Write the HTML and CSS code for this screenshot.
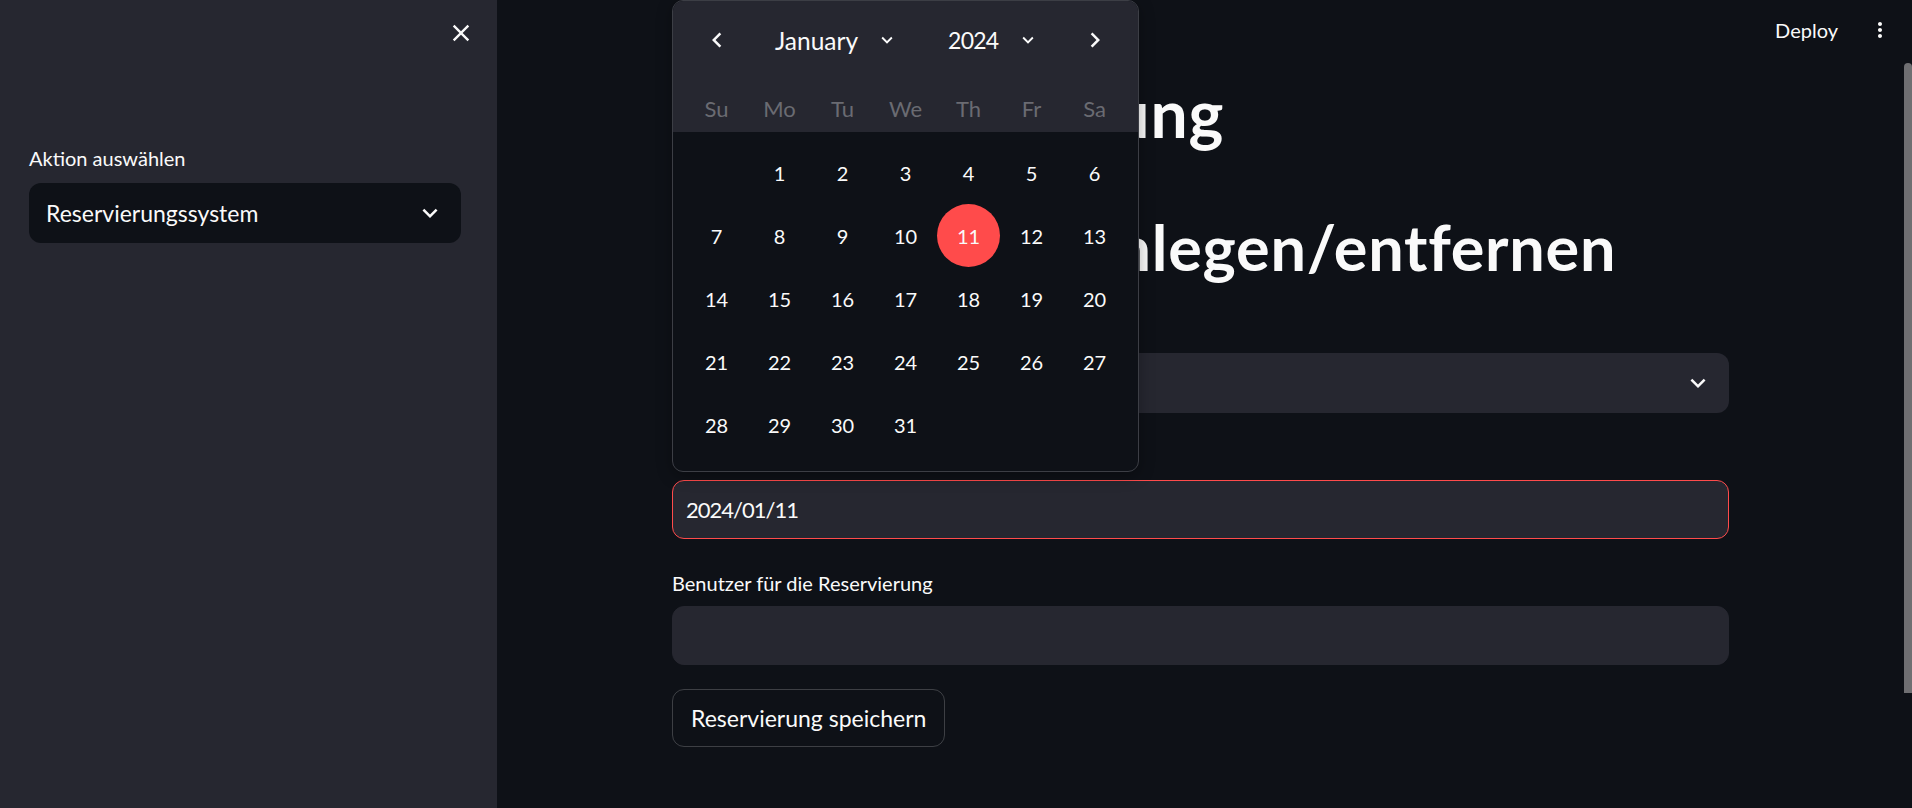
FILE: index.html
```html
<!DOCTYPE html>
<html lang="de">
<head>
<meta charset="utf-8">
<title>Reservierungssystem</title>
<link rel="stylesheet" href="styles.css">
</head>
<body>
<div class="app">
  <aside class="sidebar">
    <div class="sb-top">
      <button class="icon-btn close-btn" aria-label="Schließen">
        <svg viewBox="0 0 24 24" width="28" height="28"><path fill="#fafafa" d="M19 6.41L17.59 5 12 10.59 6.41 5 5 6.41 10.59 12 5 17.59 6.41 19 12 13.41 17.59 19 19 17.59 13.41 12z"/></svg>
      </button>
    </div>
    <div class="sb-body">
      <div class="label">Aktion auswählen</div>
      <div class="select select-dark">
        <span class="select-value">Reservierungssystem</span>
        <svg class="chev" viewBox="0 0 24 24" width="30" height="30"><path fill="#fafafa" d="M16.59 8.59L12 13.17 7.41 8.59 6 10l6 6 6-6z"/></svg>
      </div>
    </div>
  </aside>

  <main class="main">
    <header class="topbar">
      <span class="deploy">Deploy</span>
      <button class="icon-btn menu-btn" aria-label="Menü">
        <svg viewBox="0 0 24 24" width="28" height="28"><path fill="#fafafa" d="M12 8c1.1 0 2-.9 2-2s-.9-2-2-2-2 .9-2 2 .9 2 2 2zm0 2c-1.1 0-2 .9-2 2s.9 2 2 2 2-.9 2-2-.9-2-2-2zm0 6c-1.1 0-2 .9-2 2s.9 2 2 2 2-.9 2-2-.9-2-2-2z"/></svg>
      </button>
    </header>

    <div class="content">
      <h1 class="title first">Raumreservierung</h1>
      <h1 class="title second">Reservierungen anlegen/entfernen</h1>

      <div class="field field-first">
        <div class="label">Raum auswählen</div>
        <div class="select">
          <span class="select-value">Raum A</span>
          <svg class="chev" viewBox="0 0 24 24" width="30" height="30"><path fill="#fafafa" d="M16.59 8.59L12 13.17 7.41 8.59 6 10l6 6 6-6z"/></svg>
        </div>
      </div>

      <div class="field">
        <div class="label">Datum auswählen</div>
        <div class="date-wrap">
          <div class="input input-focus"><span class="date-value">2024/01/11</span></div>
          <div class="calendar">
            <div class="cal-head">
              <div class="cal-nav">
                <span class="nav-arrow">
                  <svg viewBox="0 0 24 24" width="30" height="30"><path fill="#fafafa" d="M15.41 7.41L14 6l-6 6 6 6 1.41-1.41L10.83 12z"/></svg>
                </span>
                <div class="nav-mid">
                  <span class="nav-select month">January
                    <svg viewBox="0 0 24 24" width="22" height="22"><path fill="#fafafa" d="M16.59 8.59L12 13.17 7.41 8.59 6 10l6 6 6-6z"/></svg>
                  </span>
                  <span class="nav-select year"><span class="year-text">2024</span>
                    <svg viewBox="0 0 24 24" width="22" height="22"><path fill="#fafafa" d="M16.59 8.59L12 13.17 7.41 8.59 6 10l6 6 6-6z"/></svg>
                  </span>
                </div>
                <span class="nav-arrow">
                  <svg viewBox="0 0 24 24" width="30" height="30"><path fill="#fafafa" d="M8.59 16.59L10 18l6-6-6-6-1.41 1.41L13.17 12z"/></svg>
                </span>
              </div>
              <div class="cal-week">
                <span>Su</span><span>Mo</span><span>Tu</span><span>We</span><span>Th</span><span>Fr</span><span>Sa</span>
              </div>
            </div>
            <div class="cal-days">
              <span></span><span>1</span><span>2</span><span>3</span><span>4</span><span>5</span><span>6</span>
              <span>7</span><span>8</span><span>9</span><span>10</span><span class="sel">11</span><span>12</span><span>13</span>
              <span>14</span><span>15</span><span>16</span><span>17</span><span>18</span><span>19</span><span>20</span>
              <span>21</span><span>22</span><span>23</span><span>24</span><span>25</span><span>26</span><span>27</span>
              <span>28</span><span>29</span><span>30</span><span>31</span><span></span><span></span><span></span>
            </div>
          </div>
        </div>
      </div>

      <div class="field">
        <div class="label">Benutzer für die Reservierung</div>
        <div class="input"></div>
      </div>

      <button class="btn">Reservierung speichern</button>
    </div>
  </main>

  <div class="scrollbar"><div class="thumb"></div></div>
</div>
</body>
</html>
```

FILE: styles.css
```css
* { box-sizing: border-box; }

html, body {
  margin: 0;
  padding: 0;
  height: 100%;
  background: #0e1117;
  color: #fafafa;
  font-family: Lato, "Noto Sans", sans-serif;
  overflow: hidden;
}

.app {
  display: flex;
  height: 808px;
  width: 1912px;
}

.icon-btn {
  background: transparent;
  border: 0;
  padding: 0;
  display: flex;
  align-items: center;
  justify-content: center;
  cursor: pointer;
}

/* Sidebar */
.sidebar {
  width: 497px;
  flex: none;
  background: #262730;
  padding: 0 36px 0 29px;
}

.sb-top {
  height: 66px;
  display: flex;
  justify-content: flex-end;
  align-items: center;
  margin-right: -16px;
}

.close-btn {
  width: 32px;
  height: 32px;
}

.sb-body {
  margin-top: 74px;
}

.label {
  height: 43px;
  padding-top: 5px;
  line-height: 30px;
  font-size: 20px;
  color: #fafafa;
}

.sb-body .label {
  padding-top: 3px;
}

.select {
  height: 60px;
  border-radius: 12px;
  background: #262730;
  display: flex;
  align-items: center;
  justify-content: space-between;
  padding: 0 16px 0 17px;
  font-size: 23px;
}

.select-dark {
  background: #0e1117;
}

.chev { display: block; }

/* Main */
.main {
  flex: 1;
  display: flex;
  flex-direction: column;
  min-width: 0;
}

.topbar {
  height: 60px;
  flex: none;
  display: flex;
  justify-content: flex-end;
  align-items: center;
  padding-right: 12px;
}

.deploy {
  font-size: 20px;
  margin-right: 30px;
}

.menu-btn {
  width: 24px;
  height: 32px;
}

.content {
  width: 1057px;
  margin: 0 auto;
  position: relative;
}

.title {
  margin: 0;
  padding: 30px 0 24px;
  font-size: 66px;
  line-height: 79px;
  font-weight: 700;
  white-space: nowrap;
  color: #fafafa;
}

.title.first {
  padding-top: 13px;
  letter-spacing: 1px;
}

.title.second {
  font-size: 63px;
  letter-spacing: 0.75px;
  padding-top: 31px;
  padding-bottom: 23px;
  word-spacing: -52px;
}

.field {
  margin-bottom: 24px;
}

.field-first {
  margin-top: 1px;
}

.input {
  height: 59px;
  border-radius: 12px;
  background: #262730;
  border: 1px solid #262730;
  display: flex;
  align-items: center;
  padding: 0 13px;
  font-size: 22px;
}

.date-value {
  letter-spacing: -1px;
}

.input-focus {
  border-color: #ff4b4b;
}

.date-wrap {
  position: relative;
}

.btn {
  height: 58px;
  padding: 0 18px;
  border-radius: 12px;
  border: 1px solid rgba(250, 250, 250, 0.2);
  background: transparent;
  color: #fafafa;
  font-family: inherit;
  font-size: 23px;
}

/* Calendar popover */
.calendar {
  position: absolute;
  left: 0;
  bottom: calc(100% + 8px);
  width: 467px;
  border: 1px solid #3c3e45;
  border-radius: 11px;
  background: #0e1117;
  overflow: hidden;
  box-shadow: 0 4px 16px rgba(0, 0, 0, 0.3);
  z-index: 5;
}

.cal-head {
  background: #262730;
  padding: 0 12px;
}

.cal-nav {
  height: 78px;
  margin-bottom: 5px;
  display: flex;
  align-items: center;
}

.nav-arrow {
  width: 63px;
  display: flex;
  justify-content: center;
}

.nav-mid {
  flex: 1;
  display: flex;
  justify-content: flex-start;
  padding-left: 27px;
  gap: 50px;
}

.nav-select {
  display: flex;
  align-items: center;
  gap: 18px;
  font-size: 24.5px;
}

.nav-select.year {
  font-size: 23px;
  gap: 19px;
}

.year-text {
  letter-spacing: -0.8px;
}

.cal-week {
  height: 48px;
  display: grid;
  grid-template-columns: repeat(7, 63px);
  align-items: center;
  justify-items: center;
  font-size: 22px;
  color: #6a6b72;
}

.cal-days {
  display: grid;
  grid-template-columns: repeat(7, 63px);
  grid-auto-rows: 63px;
  padding: 9px 12px 15px;
  font-size: 20px;
}

.cal-days span {
  display: flex;
  align-items: center;
  justify-content: center;
  border-radius: 50%;
}

.cal-days .sel {
  background: #ff4b4b;
}

/* Scrollbar */
.scrollbar {
  width: 8px;
  flex: none;
}

.thumb {
  margin-top: 63px;
  height: 630px;
  border-radius: 4px 4px 0 0;
  background: #6f6f72;
}
```
